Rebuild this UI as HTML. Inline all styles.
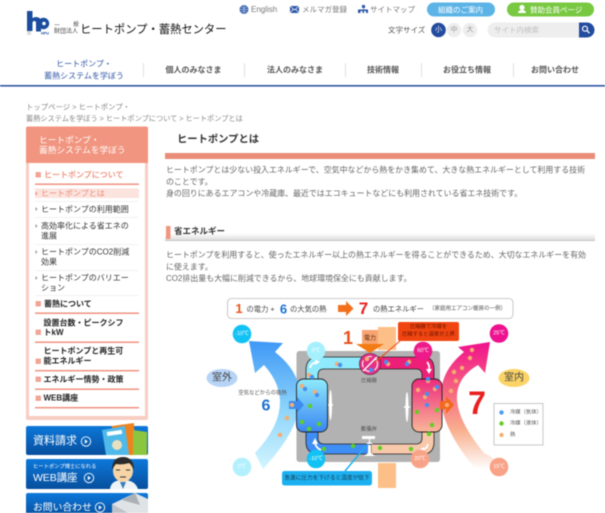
<!DOCTYPE html>
<html lang="ja"><head><meta charset="utf-8"><title>ヒートポンプとは</title>
<style>
html,body{margin:0;padding:0;background:#fff;width:605px;height:513px;overflow:hidden}
svg{display:block;filter:blur(.45px)}
text{font-family:"Liberation Sans","Noto Sans CJK JP",sans-serif;dominant-baseline:central;fill:#555;font-size:8px}
.b{font-weight:700}
.side{fill:#333}
.sb{fill:#222;font-weight:700}
.w{fill:#fff}
.c{text-anchor:middle}
</style></head><body>
<svg width="605" height="513" viewBox="0 0 605 513" xmlns="http://www.w3.org/2000/svg">
<defs>
<linearGradient id="ab" x1="0" y1="0" x2="0" y2="1"><stop offset="0" stop-color="#3f98f6"/><stop offset=".55" stop-color="#8fd6fb"/><stop offset="1" stop-color="#d3f5ff"/></linearGradient>
<linearGradient id="ar" x1="0" y1="0" x2="0" y2="1"><stop offset="0" stop-color="#f0108c"/><stop offset=".4" stop-color="#f76a80"/><stop offset=".7" stop-color="#f9b290"/><stop offset="1" stop-color="#fff"/></linearGradient>
<linearGradient id="cl" x1="0" y1="0" x2="0" y2="1"><stop offset="0" stop-color="#8eeafc"/><stop offset="1" stop-color="#3a86f2"/></linearGradient>
<linearGradient id="cr" x1="0" y1="0" x2="0" y2="1"><stop offset="0" stop-color="#ee2a7c"/><stop offset="1" stop-color="#f9b898"/></linearGradient>
<linearGradient id="bt" x1="0" y1="0" x2="0" y2="1"><stop offset="0" stop-color="#0d78da"/><stop offset="1" stop-color="#074f9e"/></linearGradient>
<linearGradient id="h2" x1="0" y1="0" x2="0" y2="1"><stop offset="0" stop-color="#fff"/><stop offset=".55" stop-color="#fff"/><stop offset="1" stop-color="#dedede"/></linearGradient>
</defs>

<!-- logo -->
<path d="M27 11h5.500v7q2-1 3.500-1 5 0 5 5v9.500h-5V23q0-2-1.700-2t-1.800 2v8H27z" fill="#1b4d9f"/>
<circle cx="43.500" cy="23.500" r="5.700" fill="#1b4d9f"/>
<circle cx="44" cy="23.500" r="1.800" fill="#fff"/>
<rect x="27" y="31" width="4" height="4" fill="#dcdcdc"/>
<text x="41" y="33.500" style="font-size:3.800px;fill:#1b4d9f" class="b">HPU</text>
<text x="57" y="26" class="c" style="font-size:5.500px;fill:#444">一</text>
<text x="76" y="25" class="c" style="font-size:5.500px;fill:#444">般</text>
<text x="54" y="32" style="font-size:6px;fill:#444">財団法人</text>
<text x="80" y="30" style="font-size:11.300px;fill:#111">ヒートポンプ・蓄熱センター</text>

<!-- top links -->
<circle cx="244" cy="9.500" r="4.500" fill="#3d66b0"/>
<path d="M239.500 9.500h9M244 5v9M241 6.500q3 3 6 0M241 12.500q3-3 6 0" stroke="#cfdcf0" stroke-width=".5" fill="none"/>
<text x="251" y="9.500" style="fill:#777;font-size:8px">English</text>
<rect x="290" y="6" width="9" height="7" fill="#2a56a8"/>
<path d="M290 6l4.500 4 4.500-4M290 13l3.500-4M299 13l-3.500-4" stroke="#fff" stroke-width=".7" fill="none"/>
<text x="302" y="9.500" style="fill:#777;font-size:7.500px">メルマガ登録</text>
<path d="M362 5h3v3h-1v1.500h4V13h-2v-2h-2v2h-1.500v-2h-2v2H358V9.500h5.500V8H362z" fill="#2a56a8"/>
<text x="370" y="9.500" style="fill:#777;font-size:7.500px">サイトマップ</text>
<rect x="427" y="2.500" width="68" height="14" rx="7" fill="#5cb3e6"/>
<text x="438" y="9.800" class="w" style="font-size:7.500px">組織のご案内</text>
<rect x="507" y="2.500" width="87" height="14" rx="7" fill="#78c841"/>
<circle cx="522" cy="7.500" r="2.600" fill="#fff"/><path d="M518 13q0-3 4-3t4 3z" fill="#fff"/>
<text x="530" y="9.800" class="w" style="font-size:7.500px">賛助会員ページ</text>

<text x="388" y="30" style="font-size:7.500px;fill:#555">文字サイズ</text>
<circle cx="438.500" cy="30" r="7.300" fill="#234b9e"/>
<text x="438.500" y="30" class="w c" style="font-size:7px">小</text>
<circle cx="454" cy="30" r="7.300" fill="#eee"/>
<text x="454" y="30" class="c" style="font-size:7px;fill:#999">中</text>
<circle cx="470" cy="30" r="7.300" fill="#eee"/>
<text x="470" y="30" class="c" style="font-size:7px;fill:#999">大</text>
<path d="M495 22.500h85v15h-85a7 7 0 0 1 0-15z" fill="#eee"/>
<text x="494" y="30" style="font-size:7.500px;fill:#c0c0c0">サイト内検索</text>
<path d="M579 22.500h8a7.500 7.500 0 0 1 0 15h-8z" fill="#234b9e"/>
<circle cx="585" cy="28.700" r="2.500" fill="none" stroke="#fff" stroke-width="1.200"/>
<path d="M587 30.700l2.500 2.500" stroke="#fff" stroke-width="1.300"/>

<!-- nav -->
<text x="84" y="64" class="c" style="font-size:8px;fill:#2f55a5">ヒートポンプ・</text>
<text x="84" y="76" class="c" style="font-size:8px;fill:#2f55a5">蓄熱システムを学ぼう</text>
<g stroke="#d8d8d8" stroke-width=".8"><path d="M143.500 63v14M244.500 63v14M345.500 63v14M421.500 63v14M513.500 63v14"/></g>
<text x="193.500" y="70" class="c b" style="font-size:8px;fill:#555">個人のみなさま</text>
<text x="295" y="70" class="c b" style="font-size:8px;fill:#555">法人のみなさま</text>
<text x="383" y="70" class="c b" style="font-size:8px;fill:#555">技術情報</text>
<text x="467" y="70" class="c b" style="font-size:8px;fill:#555">お役立ち情報</text>
<text x="555" y="70" class="c b" style="font-size:8px;fill:#555">お問い合わせ</text>
<rect x="0" y="85" width="605" height="1.600" fill="#2f55a5"/>

<!-- breadcrumb -->
<text x="26" y="107" style="font-size:7.400px;fill:#888">トップページ &gt; ヒートポンプ・</text>
<text x="26" y="118.500" style="font-size:7.200px;fill:#888">蓄熱システムを学ぼう &gt; ヒートポンプについて &gt; ヒートポンプとは</text>

<!-- sidebar -->
<rect x="26" y="126.500" width="122" height="293.500" rx="2" fill="#f8cdc3"/>
<path d="M26 163v-34.500a2 2 0 0 1 2-2h118a2 2 0 0 1 2 2V163z" fill="#f19580"/>
<rect x="29" y="163" width="116" height="253" fill="#fff"/>
<text x="39" y="140" class="w" style="font-size:8.700px">ヒートポンプ・</text>
<text x="39" y="150" class="w" style="font-size:8.700px">蓄熱システムを学ぼう</text>

<g fill="#f3a796" stroke="#ee8b78" stroke-width=".6">
<rect x="36" y="172.500" width="4.500" height="4.500"/><rect x="36" y="301.500" width="4.500" height="4.500"/><rect x="36" y="330" width="4.500" height="4.500"/><rect x="36" y="359" width="4.500" height="4.500"/><rect x="36" y="377" width="4.500" height="4.500"/><rect x="36" y="396" width="4.500" height="4.500"/>
</g>
<g fill="#ee8b78">
<rect x="35" y="183.500" width="104" height="1.400"/><rect x="35" y="312.500" width="104" height="1.400"/><rect x="35" y="341.500" width="104" height="1.400"/><rect x="35" y="370" width="104" height="1.400"/><rect x="35" y="388.500" width="104" height="1.400"/><rect x="35" y="407" width="104" height="1.400"/>
</g>
<rect x="35" y="188.500" width="104" height="9.500" fill="#fbe3de"/>
<g stroke="#eee" stroke-width=".7"><path d="M35 201.500h104M35 217.500h104M35 244.500h104M35 270.500h104M35 295.500h104"/></g>
<g fill="#999"><path d="M35.500 191.500l2 2-2 2z" fill="#ee8b78"/><path d="M35.500 207l2 2-2 2zM35.500 224l2 2-2 2zM35.500 250l2 2-2 2zM35.500 276l2 2-2 2z"/></g>
<text x="44" y="175" class="b" style="font-size:8px;fill:#f09a88">ヒートポンプについて</text>
<text x="41" y="193.300" style="font-size:8px;fill:#ee8b78">ヒートポンプとは</text>
<text x="41" y="209.500" class="side">ヒートポンプの利用範囲</text>
<text x="41" y="226" class="side">高効率化による省エネの</text>
<text x="41" y="236" class="side">進展</text>
<text x="41" y="252" class="side">ヒートポンプのCO2削減</text>
<text x="41" y="262" class="side">効果</text>
<text x="41" y="278" class="side">ヒートポンプのバリエー</text>
<text x="41" y="288" class="side">ション</text>
<text x="44" y="304" class="sb">蓄熱について</text>
<text x="43.500" y="323" class="sb">設置台数・ピークシフ</text>
<text x="43.500" y="332.500" class="sb">トkW</text>
<text x="43.500" y="351" class="sb">ヒートポンプと再生可</text>
<text x="43.500" y="361" class="sb">能エネルギー</text>
<text x="43.500" y="379.500" class="sb">エネルギー情勢・政策</text>
<text x="43.500" y="398" class="sb">WEB講座</text>

<!-- banners -->
<rect x="26" y="426" width="122" height="29" rx="2" fill="url(#bt)"/>
<path d="M112 426l22-3 1 32h-23z" fill="#f0821e"/><path d="M133 430l14 2v23h-14z" fill="#8cc63f"/><path d="M102 430l23-4 4 29h-23z" fill="#4fb9e9"/><rect x="107" y="431" width="15" height="4" fill="#fff" transform="rotate(-8 114 433)"/><circle cx="117" cy="445" r="5" fill="#e8e0c0"/>
<text x="33" y="441" class="w" style="font-size:11px">資料請求</text>
<circle cx="86" cy="441.500" r="4.700" fill="none" stroke="#fff" stroke-width=".9"/><path d="M84.800 439.300l3 2.200-3 2.200z" fill="#fff"/>

<rect x="26" y="459" width="122" height="30" rx="2" fill="url(#bt)"/>
<path d="M110 489q1-9 13-9t15 9z" fill="#eef4f6"/><path d="M120 482l3 7 3-7z" fill="#3a7ec0"/>
<ellipse cx="123" cy="471" rx="10" ry="11" fill="#f6d4a6"/><path d="M112 470q0-13 11-13t11 13q-3-6-5-7-6 2-13 1-2 2-4 6z" fill="#2a2a2a"/><path d="M116 470h4M126 470h4M120 477h6" stroke="#333" stroke-width=".9"/>
<text x="33" y="467" class="w" style="font-size:5.300px">ヒートポンプ博士になれる</text>
<text x="33" y="478" class="w" style="font-size:10.500px;letter-spacing:-.1px">WEB講座</text>
<circle cx="89" cy="478" r="4.700" fill="none" stroke="#fff" stroke-width=".9"/><path d="M87.800 475.800l3 2.200-3 2.200z" fill="#fff"/>

<rect x="26" y="493" width="122" height="24" rx="2" fill="url(#bt)"/>
<path d="M112 504l23-11 13 6v14h-30z" fill="#dfe3e6"/><path d="M112 504l16 9h-16z" fill="#bcc2c8"/><path d="M122 500l13-7 5 12z" fill="#aab0b6"/>
<text x="33" y="508" class="w" style="font-size:9.800px">お問い合わせ</text>
<circle cx="100" cy="507.500" r="4.700" fill="none" stroke="#fff" stroke-width=".9"/><path d="M98.800 505.300l3 2.200-3 2.200z" fill="#fff"/>

<!-- main text -->
<text x="177" y="140" class="b" style="font-size:10.300px;fill:#333">ヒートポンプとは</text>
<rect x="165" y="153" width="430" height="6" fill="#e98c78"/>
<text x="166" y="170" style="font-size:7.950px;fill:#666">ヒートポンプとは少ない投入エネルギーで、空気中などから熱をかき集めて、大きな熱エネルギーとして利用する技術</text>
<text x="166" y="182" style="font-size:7.950px;fill:#666">のことです。</text>
<text x="166" y="193.500" style="font-size:7.950px;fill:#666">身の回りにあるエアコンや冷蔵庫、最近ではエコキュートなどにも利用されている省エネ技術です。</text>
<rect x="165" y="225" width="430" height="15" fill="url(#h2)"/>
<rect x="165" y="240" width="430" height="1" fill="#c4c4c4"/>
<rect x="166" y="226" width="4.500" height="13" fill="#f19580"/>
<text x="174" y="231" class="b" style="font-size:8.500px;fill:#333">省エネルギー</text>
<text x="166" y="255" style="font-size:7.950px;fill:#666">ヒートポンプを利用すると、使ったエネルギー以上の熱エネルギーを得ることができるため、大切なエネルギーを有効</text>
<text x="166" y="267" style="font-size:7.950px;fill:#666">に使えます。</text>
<text x="166" y="278.500" style="font-size:7.950px;fill:#666">CO2排出量も大幅に削減できるから、地球環境保全にも貢献します。</text>

<!-- diagram header -->
<rect x="227.500" y="298.500" width="285.500" height="20" rx="4" fill="#fff" stroke="#bbb" stroke-width=".8"/>
<text x="239" y="308.500" class="c b" style="font-size:13px;fill:#e8571c">1</text>
<text x="246.500" y="308.800" style="font-size:7.300px;fill:#444">の電力 +</text>
<text x="283.500" y="309" class="c b" style="font-size:13px;fill:#1a6fd0">6</text>
<text x="290" y="308.800" style="font-size:7.300px;fill:#444">の大気の熱</text>
<path d="M338 305h8v-4l7.500 7.500-7.500 7.500v-4h-8z" fill="#f2701c"/>
<text x="363.500" y="308.500" class="c b" style="font-size:17px;fill:#e92020">7</text>
<text x="373" y="308.800" style="font-size:7.300px;fill:#444">の熱エネルギー</text>
<text x="429" y="308.800" style="font-size:5.500px;fill:#555">（家庭用エアコン暖房の一例）</text>

<!-- diagram body -->
<rect x="296.500" y="351" width="143.500" height="111" rx="3" fill="#b2b2b2"/>
<rect x="378" y="327" width="18" height="23" fill="#fdbf88"/>
<rect x="378" y="463" width="18" height="25" fill="#fdbf88"/>

<path d="M255 453Q300 405 264 365L255 373 249 341 283 343 275 352Q331 396 263 469z" fill="url(#ab)"/>
<path d="M490 342L458 347 464 352Q414 392 472 465 480 472 495 468 500 460 484 453Q433 391 478 365L485 373z" fill="url(#ar)"/>

<!-- pipe -->
<path d="M306 382v-12q0-13 13-13h52v12h-47q-6 0-6 6v7z" fill="#8eeafc" stroke="#222" stroke-width=".8"/>
<path d="M371 357h52q11 0 11 12v13h-12v-7q0-6-6-6h-45z" fill="#ee1f78" stroke="#222" stroke-width=".8"/>
<path d="M306 430v12q0 12 13 12h52v-10h-47q-6 0-6-6v-8z" fill="#3f8ef5" stroke="#222" stroke-width=".8"/>
<path d="M371 454h52q11 0 11-12v-12h-12v8q0 6-6 6h-45z" fill="#f8c8aa" stroke="#222" stroke-width=".8"/>
<rect x="296.500" y="379" width="31" height="53" rx="7" fill="url(#cl)" stroke="#222" stroke-width=".9"/>
<rect x="412" y="379" width="30" height="53" rx="7" fill="url(#cr)" stroke="#222" stroke-width=".9"/>
<circle cx="370" cy="364" r="10.500" fill="#7fd4f8" stroke="#222" stroke-width=".8"/>
<path d="M370 353.500a10.500 10.500 0 0 1 0 21 6 6 0 0 1 0-21z" fill="#ee1f78" opacity=".9"/>
<circle cx="370" cy="364" r="7.500" fill="none" stroke="#fff" stroke-width="1.100" stroke-dasharray="7 3"/>
<path d="M363 371l14-14" stroke="#fff" stroke-width="1.300"/>

<!-- power arrow -->
<rect x="362" y="330" width="16" height="15" fill="#f7a470"/>
<path d="M356 344h28l-14 9z" fill="#f47a12"/>
<text x="370" y="339" class="c" style="font-size:6px;fill:#5a2a10">電力</text>
<text x="348" y="338" class="c b" style="font-size:18px;fill:#e8501a">1</text>
<path d="M400 341l-26 22" stroke="#ee4a10" stroke-width="1.100"/>
<rect x="398" y="322" width="61" height="19" rx="2" fill="#f04510"/>
<text x="428.500" y="327" class="c" style="font-size:5.300px;fill:#6b1500">圧縮器で冷媒を</text>
<text x="428.500" y="334.500" class="c" style="font-size:5.300px;fill:#6b1500">圧縮すると温度が上昇</text>
<text x="369" y="381" class="c" style="font-size:5.300px;fill:#555">圧縮器</text>
<text x="369" y="429.500" class="c" style="font-size:5.300px;fill:#444">膨張弁</text>

<!-- valve -->
<path d="M362 436h13v3h-5v3l3 2h-7l3-2v-3h-7z M364 456l4-3v-8h3v8l4 3z" fill="#fff"/>
<path d="M366 446l-21 25" stroke="#1cb0f0" stroke-width="1.500"/>
<rect x="282" y="471" width="90" height="14.500" rx="2.500" fill="#1cb0f0"/>
<text x="327" y="478.500" class="c" style="font-size:5.700px;fill:#1c3a50">急激に圧力を下げると温度が低下</text>

<!-- fans, arrows -->
<ellipse cx="330.500" cy="405" rx="1.500" ry="15" fill="#fff"/><ellipse cx="407" cy="407" rx="1.500" ry="15" fill="#fff"/>
<path d="M330 405h-2M331 405h2M406 407h-2M408 407h2" stroke="#fff" stroke-width="1.500"/>
<path d="M310 368q1-5 7-6" fill="none" stroke="#fff" stroke-width="1.800"/><path d="M315 359l5 3-5 3z" fill="#fff"/>
<path d="M427 362q3 3 2 9" fill="none" stroke="#fff" stroke-width="1.800"/><path d="M426 369l3 5 3-5z" fill="#fff"/>
<path d="M321 450q-5-2-6-7" fill="none" stroke="#fff" stroke-width="1.800"/><path d="M312 444l3-6 3 6z" fill="#fff"/>
<path d="M428 444q-1 5-6 6" fill="none" stroke="#fff" stroke-width="1.800"/><path d="M424 447l-5 3 5 3z" fill="#fff"/>
<path d="M289 401h8v-4l7 8-7 8v-4h-8z" fill="#3d8cf0"/>
<path d="M440 401h6v-5l8 9-8 9v-5h-6z" fill="#f4681c"/>

<!-- dots -->
<g fill="#f4ad72">
<circle cx="287" cy="418" r="2.300"/><circle cx="280" cy="435" r="2.300"/><circle cx="337" cy="364" r="2.200"/><circle cx="309" cy="375" r="2.200"/><circle cx="302" cy="386" r="2.200"/><circle cx="315" cy="392" r="2.200"/><circle cx="292" cy="405" r="2.200"/><circle cx="367" cy="359" r="2.200"/><circle cx="388" cy="364" r="2.200"/><circle cx="409" cy="362" r="2.200"/><circle cx="428" cy="381" r="2.200"/><circle cx="435" cy="389" r="2.200"/><circle cx="418" cy="390" r="2.200"/><circle cx="425" cy="397" r="2.200"/><circle cx="472" cy="350" r="2.200"/><circle cx="470" cy="358" r="2.200"/><circle cx="462" cy="368" r="2.200"/><circle cx="454" cy="372" r="2.200"/><circle cx="456" cy="381" r="2.200"/><circle cx="451" cy="391" r="2.200"/><circle cx="447" cy="405" r="2.200"/>
</g>
<g fill="#4a8ff0">
<circle cx="340" cy="365" r="2.200"/><circle cx="312" cy="377" r="2.200"/><circle cx="305" cy="389" r="2.200"/><circle cx="317" cy="395" r="2.200"/><circle cx="371" cy="370" r="2.200"/><circle cx="386" cy="362" r="2.200"/><circle cx="407" cy="364" r="2.200"/><circle cx="428" cy="379" r="2.200"/><circle cx="437" cy="387" r="2.200"/><circle cx="427" cy="394" r="2.200"/><circle cx="427" cy="405" r="2.200"/>
</g>
<g fill="#5fcf22">
<circle cx="310" cy="406" r="2.200"/><circle cx="302" cy="422" r="2.200"/><circle cx="319" cy="424" r="2.200"/><circle cx="309" cy="429" r="2.200"/><circle cx="324" cy="449" r="2.200"/><circle cx="353" cy="446" r="2.200"/><circle cx="380" cy="448" r="2.200"/><circle cx="417" cy="412" r="2.200"/><circle cx="437" cy="410" r="2.200"/><circle cx="432" cy="425" r="2.200"/><circle cx="429" cy="434" r="2.200"/><circle cx="411" cy="449" r="2.200"/>
</g>

<!-- temp circles -->
<circle cx="242" cy="334" r="9.300" fill="#12c2f5"/><text x="242" y="334" class="w c" style="font-size:5.500px">-10℃</text>
<circle cx="242" cy="467" r="9.300" fill="#b2f0fd"/><text x="242" y="467" class="w c" style="font-size:5.500px">0℃</text>
<circle cx="316" cy="351" r="9.300" fill="#a6f0fd"/><text x="316" y="351" class="w c" style="font-size:5.500px">0℃</text>
<circle cx="316" cy="459" r="9.300" fill="#12c2f5"/><text x="316" y="459" class="w c" style="font-size:5.500px">-10℃</text>
<circle cx="423" cy="351" r="9.300" fill="#ee1a8a"/><text x="423" y="351" class="w c" style="font-size:5.500px">60℃</text>
<circle cx="420" cy="459" r="9.300" fill="#f8a287"/><text x="420" y="459" class="w c" style="font-size:5.500px">20℃</text>
<circle cx="499" cy="333.500" r="9.300" fill="#ee1290"/><text x="499" y="333.500" class="w c" style="font-size:5.500px">25℃</text>
<circle cx="499" cy="467" r="9.300" fill="#f8a287"/><text x="499" y="467" class="w c" style="font-size:5.500px">15℃</text>

<ellipse cx="222" cy="378" rx="15.500" ry="9" fill="#b7d4f7"/><text x="222" y="378" class="c" style="font-size:10px;fill:#444">室外</text>
<ellipse cx="514" cy="378" rx="15.500" ry="9" fill="#fbd366"/><text x="514" y="378" class="c" style="font-size:10px;fill:#444">室内</text>
<text x="262.500" y="393.500" class="c" style="font-size:5.400px;fill:#555">空気などからの吸熱</text>
<text x="266" y="406" class="c b" style="font-size:16px;fill:#1a6fd0">6</text>
<text x="477" y="403" class="c b" style="font-size:32px;fill:#e92020">7</text>

<!-- legend -->
<rect x="494" y="403.500" width="49" height="41.500" fill="#fff" stroke="#bbb" stroke-width=".8"/>
<circle cx="501.500" cy="412.500" r="2.200" fill="#4a9cf0"/><text x="510" y="412.500" style="font-size:5.300px">冷媒（気体）</text>
<circle cx="501.500" cy="423.500" r="2.200" fill="#66cc22"/><text x="510" y="423.500" style="font-size:5.300px">冷媒（液体）</text>
<circle cx="501.500" cy="435" r="2.200" fill="#f8b070"/><text x="510" y="435" style="font-size:5.300px">熱</text>
</svg>
</body></html>
